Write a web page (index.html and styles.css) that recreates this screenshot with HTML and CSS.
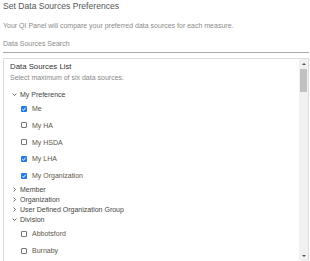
FILE: index.html
```html
<!DOCTYPE html>
<html>
<head>
<meta charset="utf-8">
<link rel="stylesheet" href="styles.css">
</head>
<body>
<div class="page">
  <h1 class="title">Set Data Sources Preferences</h1>
  <p class="subtitle">Your QI Panel will compare your preferred data sources for each measure.</p>
  <div class="search">Data Sources Search</div>
  <div class="panel">
    <div class="panel-body">
      <div class="panel-title">Data Sources List</div>
      <div class="panel-hint">Select maximum of six data sources.</div>
      <ul class="tree">
        <li>
          <div class="group-head"><svg class="chev" width="5" height="5" viewBox="0 0 5 5"><path d="M0.6 1.6 L2.5 3.5 L4.4 1.6" fill="none" stroke="#555" stroke-width="0.9"/></svg><span>My Preference</span></div>
          <ul class="items">
            <li class="item"><span class="cb checked"><svg width="6" height="6" viewBox="0 0 6 6"><path d="M1.3 3.2 L2.5 4.3 L4.7 1.7" fill="none" stroke="#fff" stroke-width="1"/></svg></span><span class="label">Me</span></li>
            <li class="item"><span class="cb"></span><span class="label">My HA</span></li>
            <li class="item"><span class="cb"></span><span class="label">My HSDA</span></li>
            <li class="item"><span class="cb checked"><svg width="6" height="6" viewBox="0 0 6 6"><path d="M1.3 3.2 L2.5 4.3 L4.7 1.7" fill="none" stroke="#fff" stroke-width="1"/></svg></span><span class="label">My LHA</span></li>
            <li class="item"><span class="cb checked"><svg width="6" height="6" viewBox="0 0 6 6"><path d="M1.3 3.2 L2.5 4.3 L4.7 1.7" fill="none" stroke="#fff" stroke-width="1"/></svg></span><span class="label">My Organization</span></li>
          </ul>
        </li>
        <li><div class="group-head"><svg class="chev" width="5" height="5" viewBox="0 0 5 5"><path d="M1.6 0.6 L3.5 2.5 L1.6 4.4" fill="none" stroke="#555" stroke-width="0.9"/></svg><span>Member</span></div></li>
        <li><div class="group-head"><svg class="chev" width="5" height="5" viewBox="0 0 5 5"><path d="M1.6 0.6 L3.5 2.5 L1.6 4.4" fill="none" stroke="#555" stroke-width="0.9"/></svg><span>Organization</span></div></li>
        <li><div class="group-head"><svg class="chev" width="5" height="5" viewBox="0 0 5 5"><path d="M1.6 0.6 L3.5 2.5 L1.6 4.4" fill="none" stroke="#555" stroke-width="0.9"/></svg><span>User Defined Organization Group</span></div></li>
        <li>
          <div class="group-head"><svg class="chev" width="5" height="5" viewBox="0 0 5 5"><path d="M0.6 1.6 L2.5 3.5 L4.4 1.6" fill="none" stroke="#555" stroke-width="0.9"/></svg><span>Division</span></div>
          <ul class="items">
            <li class="item"><span class="cb"></span><span class="label">Abbotsford</span></li>
            <li class="item"><span class="cb"></span><span class="label">Burnaby</span></li>
          </ul>
        </li>
      </ul>
    </div>
    <div class="scrollbar">
      <div class="sb-btn"><span class="arrow-up"></span></div>
      <div class="sb-thumb"></div>
      <div class="sb-track"></div>
      <div class="sb-btn"><span class="arrow-down"></span></div>
    </div>
  </div>
</div>
</body>
</html>
```
FILE: styles.css
```css
html, body {
  margin: 0;
  padding: 0;
  background: #fff;
}
body {
  font-family: "Liberation Sans", Arial, sans-serif;
  height: 261px;
  overflow: hidden;
}
.page {
  padding: 1px 1px 0 3px;
}
.title {
  margin: 0;
  font-size: 8.6px;
  font-weight: normal;
  line-height: 10px;
  color: #555;
}
.subtitle {
  margin: 9.6px 0 0;
  font-size: 7px;
  line-height: 9px;
  color: #8a8a8a;
}
.search {
  margin-top: 9px;
  font-size: 7px;
  line-height: 9px;
  color: #8a8a8a;
  padding-bottom: 4px;
  border-bottom: 1px solid #aaa;
}
.panel {
  margin-top: 5px;
  height: 204px;
  box-sizing: border-box;
  border: 1px solid #ddd;
  display: flex;
  overflow: hidden;
}
.panel-body {
  flex: 1;
  padding: 3px 0 0 6px;
}
.panel-title {
  font-size: 7.8px;
  line-height: 10px;
  color: #333;
}
.panel-hint {
  margin-top: 1.5px;
  font-size: 7px;
  line-height: 9px;
  color: #888;
}
.tree {
  list-style: none;
  margin: 7.6px 0 0;
  padding: 0 0 0 2px;
}
.group-head {
  height: 10px;
  display: flex;
  align-items: center;
  gap: 3px;
  font-size: 7px;
  color: #444;
}
.chev {
  display: block;
  flex: none;
}
.items {
  list-style: none;
  margin: 0;
  padding: 0.5px 0 1px 9px;
}
.item {
  height: 16.75px;
  display: flex;
  align-items: center;
  gap: 5px;
  font-size: 7px;
}
.label {
  color: #5e5648;
}
.cb {
  width: 6px;
  height: 6px;
  box-sizing: border-box;
  border: 1px solid #777;
  border-radius: 1px;
  flex: none;
  display: flex;
}
.cb.checked {
  border: none;
  background: #2479e8;
}
.cb svg {
  display: block;
}
.scrollbar {
  width: 9px;
  flex: none;
  background: #f1f1f1;
  display: flex;
  flex-direction: column;
  align-items: center;
}
.sb-btn {
  height: 10px;
  width: 9px;
  display: flex;
  align-items: center;
  justify-content: center;
}
.arrow-up {
  width: 0;
  height: 0;
  border-left: 2px solid transparent;
  border-right: 2px solid transparent;
  border-bottom: 2px solid #505050;
}
.arrow-down {
  width: 0;
  height: 0;
  border-left: 2px solid transparent;
  border-right: 2px solid transparent;
  border-top: 2px solid #505050;
}
.sb-thumb {
  width: 7px;
  height: 23px;
  background: #c1c1c1;
}
.sb-track {
  flex: 1;
}
```
